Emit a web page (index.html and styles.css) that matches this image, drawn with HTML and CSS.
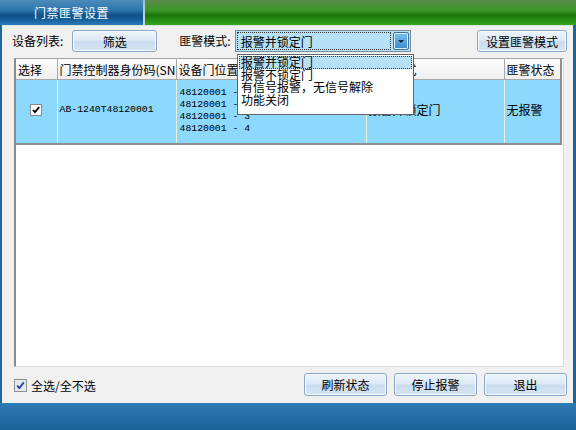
FILE: index.html
```
<!DOCTYPE html>
<html lang="zh-CN">
<head>
    <meta charset="UTF-8">
    <title>门禁匪警设置</title>
    <link rel="stylesheet" href="styles.css">
</head>
<body>
    <div class="header">
        <div class="tab">门禁匪警设置</div>
        <div class="tab-sep"></div>
        <div class="tab-rest"></div>
    </div>

    <div class="panel">
        <div class="toolbar">
            <span class="label">设备列表:</span>
            <button class="btn btn-filter">筛选</button>
            <span class="label label-mode">匪警模式:</span>
            <div class="select">
                <span class="select-text">报警并锁定门</span>
                <span class="select-arrow">
                    <svg width="8" height="5" viewBox="0 0 8 5"><path d="M1 1h6L4 4z" fill="#1a2a3a"/></svg>
                </span>
            </div>
            <button class="btn btn-set">设置匪警模式</button>
        </div>

        <div class="list">
            <table class="grid">
                <colgroup>
                    <col style="width:41px">
                    <col style="width:119px">
                    <col style="width:190px">
                    <col style="width:138px">
                    <col style="width:57px">
                </colgroup>
                <thead>
                    <tr>
                        <th>选择</th>
                        <th>门禁控制器身份码(SN)</th>
                        <th>设备门位置</th>
                        <th>匪警模式</th>
                        <th>匪警状态</th>
                    </tr>
                </thead>
                <tbody>
                    <tr>
                        <td class="cell-check">
                            <svg width="12" height="12" viewBox="0 0 12 12">
                                <rect x="0.5" y="0.5" width="11" height="11" fill="#fff" stroke="#8a8a8a"/>
                                <path d="M3 6l2 2.2L9.2 3.2" fill="none" stroke="#000" stroke-width="1.8"/>
                            </svg>
                        </td>
                        <td class="mono">AB-1240T48120001</td>
                        <td class="mono doors">48120001 - 1<br>48120001 - 2<br>48120001 - 3<br>48120001 - 4</td>
                        <td>报警并锁定门</td>
                        <td>无报警</td>
                    </tr>
                </tbody>
            </table>
        </div>

        <div class="footer">
            <label class="check-all">
                <svg width="13" height="13" viewBox="0 0 13 13">
                    <rect x="0.5" y="0.5" width="12" height="12" fill="#e4e8ee" stroke="#8e8f8f"/>
                    <path d="M3.2 6.6l2.2 2.4L9.8 3.4" fill="none" stroke="#2a3fb0" stroke-width="1.8"/>
                </svg>
                全选/全不选
            </label>
            <div class="footer-btns">
                <button class="btn btn-bottom">刷新状态</button>
                <button class="btn btn-bottom">停止报警</button>
                <button class="btn btn-bottom">退出</button>
            </div>
        </div>

        <!-- open dropdown of the mode select -->
        <ul class="dropdown">
            <li class="active">报警并锁定门</li>
            <li>报警不锁定门</li>
            <li>有信号报警，无信号解除</li>
            <li>功能关闭</li>
        </ul>
    </div>

    <div class="bottom-bar"></div>
</body>
</html>
```

FILE: styles.css
```
body {
    margin: 0;
    width: 576px;
    height: 430px;
    overflow: hidden;
    font-family: "Noto Sans CJK SC", "DejaVu Sans", sans-serif;
    font-size: 12px;
    color: #000;
    background: #1b679d;
}

.header {
    display: flex;
    height: 25px;
}

.tab {
    width: 143px;
    color: #fff;
    font-size: 12px;
    line-height: 26px;
    text-align: center;
    letter-spacing: 0.5px;
    background: linear-gradient(#4d8cba 0%, #2e76ad 40%, #0f5289 60%, #125b96 75%, #2b7abb 100%);
}

.tab-sep {
    width: 2px;
    background: linear-gradient(#9fbfd2, #c6d9e2);
}

.tab-rest {
    flex: 1;
    background: linear-gradient(#5a8a4c 0%, #3c9828 40%, #1d760e 60%, #23880f 75%, #36a51c 100%);
}

.panel {
    position: relative;
    margin: 0 3px 0 2px;
    height: 378px;
    box-sizing: border-box;
    padding: 4px 8px 0 8px;
    background: #f0f0f0;
    border-top: 1px solid #d6e6dc;
}

.toolbar {
    display: flex;
    align-items: center;
    height: 22px;
}

.label {
    line-height: 22px;
    margin-left: 2px;
}

.label-mode {
    margin-left: 22px;
}

.btn {
    font-family: inherit;
    font-size: 12px;
    height: 22px;
    padding: 0;
    border: 1px solid #8aa7c8;
    border-radius: 3px;
    box-shadow: inset 0 0 0 1px #f4f9fe;
    background: linear-gradient(#edf5fc 0%, #dde9f5 45%, #c9dcee 55%, #d6e5f3 100%);
    color: #000;
}

.btn-filter {
    width: 85px;
    margin-left: 9px;
}

.select {
    display: flex;
    align-items: center;
    width: 176px;
    height: 22px;
    margin-left: 4px;
    box-sizing: border-box;
    border: 1px solid #7a8c99;
    background: #b5e0f5;
    padding: 1px;
}

.select-text {
    flex: 1;
    height: 18px;
    line-height: 18px;
    padding-left: 3px;
    border: 1px dotted #333;
    box-sizing: border-box;
}

.select-arrow {
    display: flex;
    align-items: center;
    justify-content: center;
    width: 16px;
    height: 18px;
    margin-left: 2px;
    box-sizing: border-box;
    border: 1px solid #3f72a3;
    border-radius: 2px;
    box-shadow: inset 0 0 0 1px #d8ecfa;
    background: linear-gradient(#7cc0ec, #3a8ad0);
}

.btn-set {
    width: 90px;
    margin-left: auto;
    margin-right: -2px;
}

.list {
    margin-top: 6px;
    margin-left: 4px;
    width: 550px;
    height: 309px;
    box-sizing: border-box;
    background: #fff;
    border-left: 2px solid #8c8c8c;
    border-top: 1px solid #a4a4a4;
    border-right: 1px solid #dcdcdc;
    border-bottom: 1px solid #dcdcdc;
}

.grid {
    width: 545px;
    table-layout: fixed;
    border-collapse: collapse;
    border-right: 2px solid #8f8f8f;
    border-bottom: 2px solid #8f8f8f;
}

.grid th {
    height: 20px;
    padding: 0 2px;
    font-weight: normal;
    text-align: left;
    white-space: nowrap;
    overflow: hidden;
    background: linear-gradient(#fdfdfd, #efefef);
    border-right: 1px solid #a8a8a8;
    border-bottom: 1px solid #a8a8a8;
}

.grid td {
    height: 58px;
    padding: 0 2px 5px 2px;
    line-height: 13px;
    white-space: nowrap;
    overflow: hidden;
    background: #8dd8fd;
    border-right: 1px solid #e8eed6;
}

.grid .cell-check {
    text-align: center;
    padding-bottom: 3px;
}

.cell-check svg {
    display: block;
    margin: 0 auto;
}

.mono {
    font-family: "Liberation Mono", monospace;
    font-size: 9.8px;
}

.grid .doors {
    line-height: 12px;
    padding-left: 3px;
    padding-bottom: 2px;
}

.footer {
    display: flex;
    align-items: center;
    margin-top: 6px;
    height: 23px;
}

.check-all {
    display: flex;
    align-items: center;
    gap: 4px;
    margin-left: 4px;
    margin-top: 2px;
}

.check-all svg {
    display: block;
}

.footer-btns {
    display: flex;
    gap: 7px;
    margin-left: auto;
    margin-right: -2px;
}

.btn-bottom {
    width: 83px;
    height: 23px;
}

.dropdown {
    position: absolute;
    left: 235px;
    top: 28px;
    width: 177px;
    height: 61px;
    margin: 0;
    padding: 1px;
    box-sizing: border-box;
    list-style: none;
    background: #fff;
    border: 1px solid #646464;
}

.dropdown li {
    height: 12.5px;
    line-height: 12px;
    padding-left: 2px;
    white-space: nowrap;
}

.dropdown li.active {
    background: #b5e0f5;
    outline: 1px dotted #333;
    outline-offset: -1px;
}

.bottom-bar {
    height: 27px;
    background: linear-gradient(#2e7ab2, #18629a);
}
```
